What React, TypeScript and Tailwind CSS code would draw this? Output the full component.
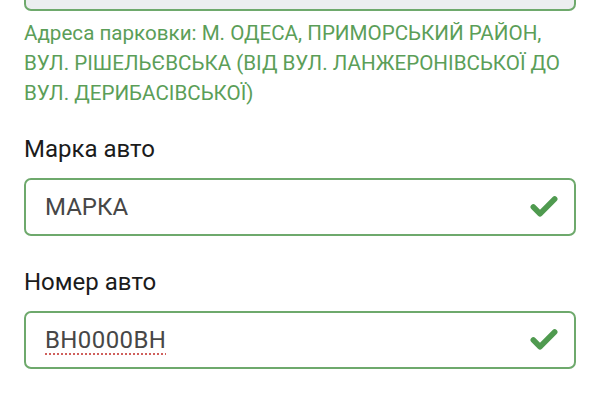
import { Check } from "lucide-react"

function Field({ label, value, spell, className }: { label: string; value: string; spell?: boolean; className: string }) {
  return (
    <div className={className}>
      <label className="block text-[24px] leading-[30px] text-[#1b1b1b]">{label}</label>
      <div className="mt-[14px] h-[58px] flex items-center justify-between rounded-[7px] border-2 border-[#6ea96c] bg-white pl-[19px] pr-[14px]">
        <span
          className={
            "text-[24px] text-[#474747] " +
            (spell ? "tracking-[0.4px] underline decoration-dotted decoration-[#d0605c] decoration-2 underline-offset-[5px]" : "")
          }
        >
          {value}
        </span>
        <Check className="h-[32px] w-[32px] text-[#4f9a4f]" strokeWidth={4.2} />
      </div>
    </div>
  )
}

export default function App() {
  return (
    <main className="min-h-screen w-[600px] h-[400px] overflow-hidden bg-white font-['Roboto',sans-serif]">
      <div className="px-6">
        {/* disabled field above, scrolled off */}
        <div className="mt-[-46px] h-[57px] rounded-[7px] border-2 border-[#6ea96c] bg-[#eceef0]" />
        <p className="mt-[7px] text-[20.6px] leading-[30px] text-[#5b9e58]">
          Адреса парковки: М. ОДЕСА, ПРИМОРСЬКИЙ РАЙОН, ВУЛ. РІШЕЛЬЄВСЬКА (ВІД ВУЛ. ЛАНЖЕРОНІВСЬКОЇ ДО ВУЛ. ДЕРИБАСІВСЬКОЇ)
        </p>
        <Field className="mt-[26px]" label="Марка авто" value="МАРКА" />
        <Field className="mt-[31px]" label="Номер авто" value="ВН0000ВН" spell />
      </div>
    </main>
  )
}
